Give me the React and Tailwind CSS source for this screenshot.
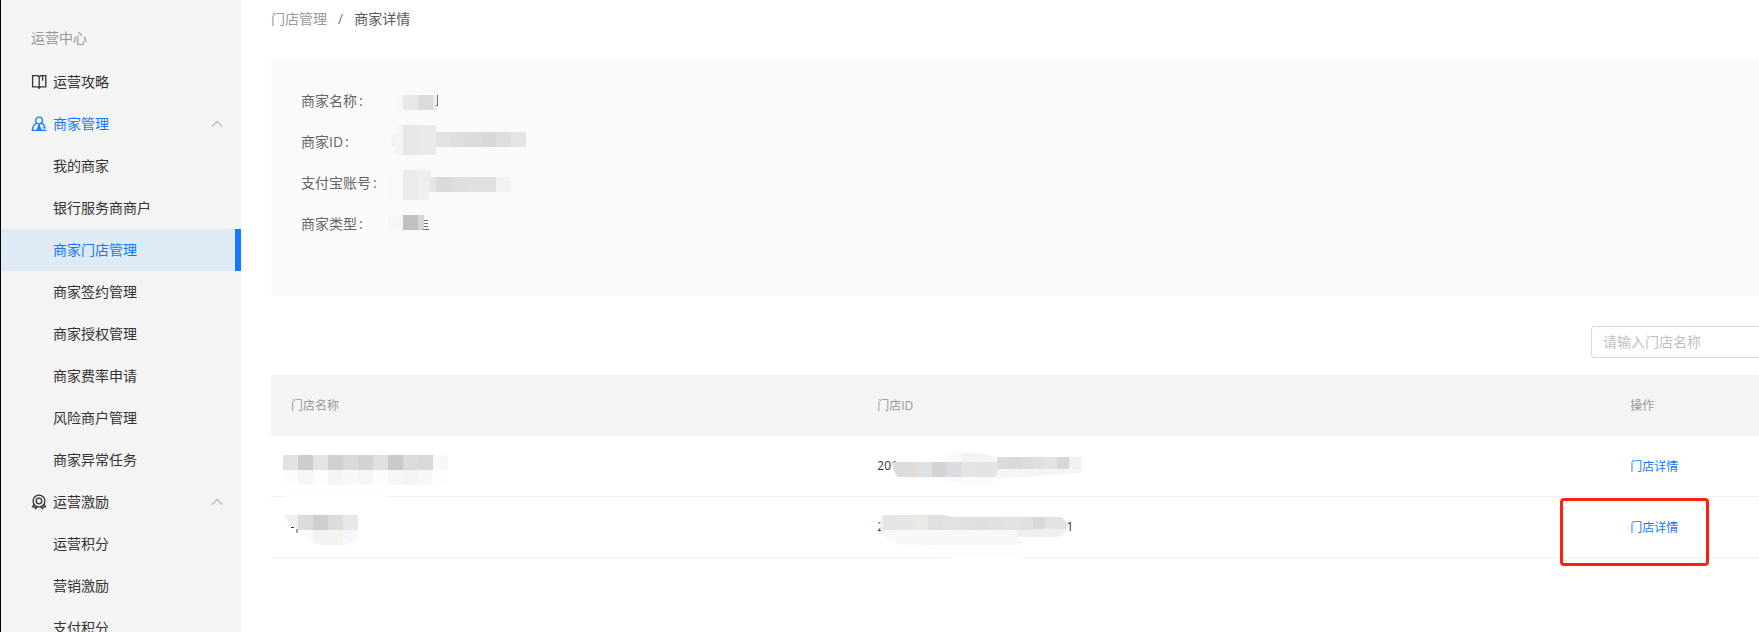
const merchantItems = [
  "我的商家",
  "银行服务商商户",
  "商家门店管理",
  "商家签约管理",
  "商家授权管理",
  "商家费率申请",
  "风险商户管理",
  "商家异常任务",
];

const rewardItems = ["运营积分", "营销激励", "支付积分"];

const ACTIVE_ITEM = "商家门店管理";

const BookIcon = () => (
  <svg width="16" height="16" viewBox="0 0 16 16" fill="none" stroke="currentColor" strokeWidth="1.3">
    <path d="M8.2 3 7 1.7H1.6v11.2h5.2l1.4 1.4 1.4-1.4h5.2V1.7H9.4L8.2 3v11" />
    <path d="M11.6 1.7v5" />
  </svg>
);

const MerchantIcon = () => (
  <svg width="16" height="16" viewBox="0 0 16 16" fill="none" stroke="currentColor" strokeWidth="1.3">
    <circle cx="8" cy="4.6" r="3.4" />
    <path d="M5.8 7.2C3.2 8.4 1.6 10.8 1.3 14.3h13.9" />
    <path d="M10.2 7.2c1.8.7 3 2 3.7 3.8M11.6 11.9h3.2" />
    <path d="M8 8.8 6.4 14M8 8.8 9.8 14M8 10.5V14" />
  </svg>
);

const MedalIcon = () => (
  <svg width="16" height="16" viewBox="0 0 16 16" fill="none" stroke="currentColor" strokeWidth="1.3">
    <circle cx="8" cy="7" r="5.9" />
    <circle cx="8" cy="7" r="2.8" />
    <path d="M3.2 10.4 1.6 12.8l2.2.2.6 1.6 2.2-2M12.8 10.4l1.6 2.4-2.2.2-.6 1.6-2.2-2" />
  </svg>
);

const ChevronUp = () => (
  <svg width="12" height="12" viewBox="0 0 12 12" fill="none" stroke="#b8b9c2" strokeWidth="1.4">
    <path d="M1 8.4 6 3.4l5 5" />
  </svg>
);

// Fila de bloques para los datos ocultos
const Blocks = ({ x, y, w = 15, h = 15, colors }) =>
  colors.map((c, i) => <rect key={i} x={x + i * w} y={y} width={w} height={h} fill={c} />);

const NameMask = () => (
  <svg width="150" height="41" shapeRendering="crispEdges">
    <rect x="10" y="15" width="7" height="15" fill="#f7f8f7" />
    <Blocks x={17} y={15} colors={["#e6e9e8", "#dcdbda"]} />
    <rect x="47" y="15" width="3" height="15" fill="#e9eaea" />
    <path d="M51.5 15v10.5h-2" stroke="#7d6a6a" fill="none" />
  </svg>
);

const IdMask = () => (
  <svg width="150" height="41">
    <path d="M10 11C4 13 4 24 7 26h3Z" fill="#f1f1ef" />
    <path d="M10 4h7v30H8Z" fill="#f5f5f4" />
    <Blocks x={17} y={4} h={30} colors={["#e7e7e7", "#e9e9e9"]} />
    <rect x="47" y="4" width="3" height="30" fill="#ebebeb" />
    <Blocks x={50} y={11} colors={["#e3e2e0", "#dedede", "#dbdbdb", "#d8d8d8", "#dedede", "#e4e4e4"]} />
  </svg>
);

const AccountMask = () => (
  <svg width="150" height="41">
    <path d="M4 8h13v30H0Z" fill="#f9f9f9" />
    <rect x="41" y="15" width="9" height="15" fill="#e6e6e6" />
    <rect x="17" y="8" width="15" height="30" fill="#ebebeb" />
    <path d="M32 8h13l-3 30H32Z" fill="#eeeeee" />
    <Blocks x={50} y={15} colors={["#dadad7", "#dedede", "#dfe1e1", "#dfe0df", "#f2f2f2"]} />
  </svg>
);

const TypeMask = () => (
  <svg width="150" height="41" shapeRendering="crispEdges">
    <Blocks x={2} y={12} colors={["#f7f6f4", "#c0c0c0"]} />
    <rect x="32" y="12" width="6" height="15" fill="#d4d6d8" />
    <path d="M38 17.5h4M38 20.5h4M38 23.5h4M37 26.5h6" stroke="#6b7078" />
  </svg>
);

const StoreMaskOne = () => (
  <svg className="block -mb-px" width="170" height="61">
    <Blocks
      x={0}
      y={19}
      colors={["#e4e3e1", "#cccccc", "#e4e4e1", "#d0d0d2", "#d9dbda", "#d2d4d3", "#e0e0e0", "#c8cac9", "#dbdbdb", "#d9d9d9", "#f8f8fb"]}
    />
    <Blocks
      x={0}
      y={34}
      colors={["#fcfcfc", "#f6f6f6", "#fcfdfc", "#f5f5f5", "#f7f9f9", "#f6f6f6", "#fafdfc", "#f7f7f7", "#f4f4f4", "#f8f8f8", "#fdfdfd"]}
    />
    <rect x="3" y="54" width="100" height="7" fill="#fefefe" />
  </svg>
);

const StoreMaskTwo = () => (
  <svg className="block -mb-px" width="170" height="61">
    <clipPath id="store-two">
      <path d="M1 18h74v22c-4 5-9 8-16 8H44c-14 0-20-6-26-14C11 31 5 27 1 18Z" />
    </clipPath>
    <g clipPath="url(#store-two)">
      <Blocks x={0} y={18} colors={["#efefed", "#dcdcdc", "#cfcfcf", "#dcdcdc", "#e8e8e8"]} />
      <Blocks x={0} y={33} colors={["#ffffff", "#f9f9f9", "#f2f2f2", "#f5f3f1", "#f5f7fa"]} />
    </g>
    <rect x="8" y="30" width="3" height="1" fill="#333" />
    <rect x="13" y="32" width="1" height="4" fill="#d9995a" />
    <rect x="14" y="32" width="1" height="4" fill="#6fb0d8" />
  </svg>
);

const StoreIdMaskOne = () => (
  <svg className="absolute left-0 top-0" width="240" height="61">
    <path d="M136 33h88v4l-88 6Z" fill="#f4f5f5" />
    <Blocks x={140} y={21} w={12} h={12} colors={["#dcdbda", "#d8d8d8", "#dcdcdc", "#e0dfdd", "#e4e3e0", "#d6d7d9", "#f0f0f0"]} />
    <path d="M89 17h35c10 3 16 10 16 18 0 6-3 10-8 14h-18L89 46Z" fill="#fafafa" />
    <clipPath id="store-id-one">
      <path d="M36 26h104c2 5 1 11-3 15H41c-4-4-6-9-5-15Z" />
    </clipPath>
    <g clipPath="url(#store-id-one)">
      <Blocks x={30} y={26} colors={["#dcdcdc", "#dedddb", "#dde1e4", "#d4d4d6", "#dcdde0", "#e5e5e3", "#e2e4e3", "#e2e4e3"]} />
    </g>
    <path d="M104 17h16c11 0 17 3 20 9h-36Z" fill="#f3f4f4" />
  </svg>
);

const StoreIdMaskTwo = () => (
  <svg className="absolute left-0 top-0" width="240" height="61">
    <clipPath id="store-id-two">
      <path d="M25 18h62l9 2h107c5 1 7 6 7 10s-5 10-11 10h-39c4 2 6 5 7 8H51c-14 0-22-6-27-14-2-5-1-11 1-16Z" />
    </clipPath>
    <path d="M60 47h106v6l-4 8H95Z" fill="#fdfdfd" />
    <g clipPath="url(#store-id-two)">
      <rect x="20" y="33" width="148" height="15" fill="#f7f8f8" />
      <rect x="160" y="32" width="60" height="8" fill="#eeefef" />
      <rect x="20" y="18" width="6" height="15" fill="#f1f1f1" />
      <Blocks x={26} y={18} colors={["#e4e6e5", "#e6e6e6", "#e9e9e6", "#dfe0e0", "#e2e2e1"]} />
      <Blocks
        x={101}
        y={20}
        w={15}
        h={13}
        colors={["#e1e1e1", "#dfdfdf", "#e1e1e1", "#e2e2e1", "#e2e2e1"]}
      />
      <rect x="164" y="20" width="12" height="12" fill="#e2e1df" />
      <rect x="176" y="20" width="12" height="12" fill="#d7d8da" />
      <rect x="188" y="20" width="24" height="12" fill="#e2e3e3" />
    </g>
  </svg>
);

const infoRows = [
  { label: "商家名称", value: <NameMask /> },
  { label: "商家ID", value: <IdMask /> },
  { label: "支付宝账号", value: <AccountMask /> },
  { label: "商家类型", value: <TypeMask /> },
];

const stores = [
  { id: "201", name: <StoreMaskOne />, mask: <StoreIdMaskOne />, marked: false },
  { id: "2", tail: "1", name: <StoreMaskTwo />, mask: <StoreIdMaskTwo />, marked: true },
];

const GroupButton = ({ icon, label, active, open }) => (
  <button
    type="button"
    aria-expanded={open}
    className={`flex h-[42px] w-full items-center pl-[30px] pr-[18px] text-left ${active ? "text-[#1677ff]" : "text-[#333]"}`}
  >
    {icon}
    <span className="ml-1.5 flex-1">{label}</span>
    {open && <ChevronUp />}
  </button>
);

const SubMenu = ({ items }) => (
  <ul>
    {items.map((item) => (
      <li key={item}>
        <a
          href="#"
          className={`flex h-[42px] items-center pl-[52px] ${
            item === ACTIVE_ITEM ? "border-r-6 border-[#1677ff] bg-[#deebf5] text-[#1677ff]" : "text-[#333]"
          }`}
        >
          {item}
        </a>
      </li>
    ))}
  </ul>
);

export default function App() {
  return (
    <div className="flex h-screen overflow-hidden bg-white font-['Open_Sans','Noto_Sans_CJK_SC',sans-serif] text-sm text-[#333]">
      <nav className="w-[241px] shrink-0 border-l border-black bg-[#f4f4f4]">
        <h2 className="flex h-[61px] items-center pl-[30px] pt-3.5 text-[#999]">运营中心</h2>
        <GroupButton icon={<BookIcon />} label="运营攻略" />
        <GroupButton icon={<MerchantIcon />} label="商家管理" active open />
        <SubMenu items={merchantItems} />
        <GroupButton icon={<MedalIcon />} label="运营激励" open />
        <SubMenu items={rewardItems} />
      </nav>

      <main className="min-w-0 flex-1 pl-[30px]">
        <div className="flex h-[60px] items-start pt-[9px] text-[#999]">
          <a href="#">门店管理</a>
          <span className="mx-[11px] text-[#777]">/</span>
          <span className="text-[#595959]">商家详情</span>
        </div>

        <dl className="bg-[#fafafa] pb-[52px] pl-[30px] pt-5 text-[#666]">
          {infoRows.map((row) => (
            <div key={row.label} className="flex h-[41px] items-center">
              <dt className="w-[85px]">
                {row.label}
                <span className="ml-0.5">:</span>
              </dt>
              <dd>{row.value}</dd>
            </div>
          ))}
        </dl>

        <div className="flex justify-end pb-[17px] pt-[30px]">
          <input
            type="text"
            aria-label="门店名称"
            placeholder="请输入门店名称"
            className="h-8 w-[168px] rounded-l border border-r-0 border-[#d9d9d9] bg-white pb-0.5 pl-[11px] placeholder:text-[#bfbfbf]"
          />
        </div>

        <table className="w-full table-fixed border-separate border-spacing-0 text-left text-xs">
          <thead>
            <tr className="h-[61px] bg-[#f4f4f4] text-[#999]">
              <th className="w-[39.4%] pl-5 font-normal">门店名称</th>
              <th className="w-[50.6%] pl-5 font-normal">门店ID</th>
              <th className="pl-5 font-normal">操作</th>
            </tr>
          </thead>
          <tbody>
            {stores.map((store) => (
              <tr key={store.id} className="h-[61px]">
                <td className="border-b border-[#f2f2f2] p-0 pl-3">{store.name}</td>
                <td className="relative border-b border-[#f2f2f2] p-0 pl-5">
                  <span className="flex w-[196px] justify-between">
                    <span>{store.id}</span>
                    <span>{store.tail}</span>
                  </span>
                  {store.mask}
                </td>
                <td className="relative border-b border-[#f2f2f2] pb-0 pl-5 pt-0.5">
                  <a href="#" className="text-[#1677ff]">门店详情</a>
                  {store.marked && (
                    <span className="pointer-events-none absolute -left-[50px] top-px h-[68px] w-[149px] rounded border-3 border-[#ff2010]" />
                  )}
                </td>
              </tr>
            ))}
          </tbody>
        </table>
      </main>
    </div>
  );
}
